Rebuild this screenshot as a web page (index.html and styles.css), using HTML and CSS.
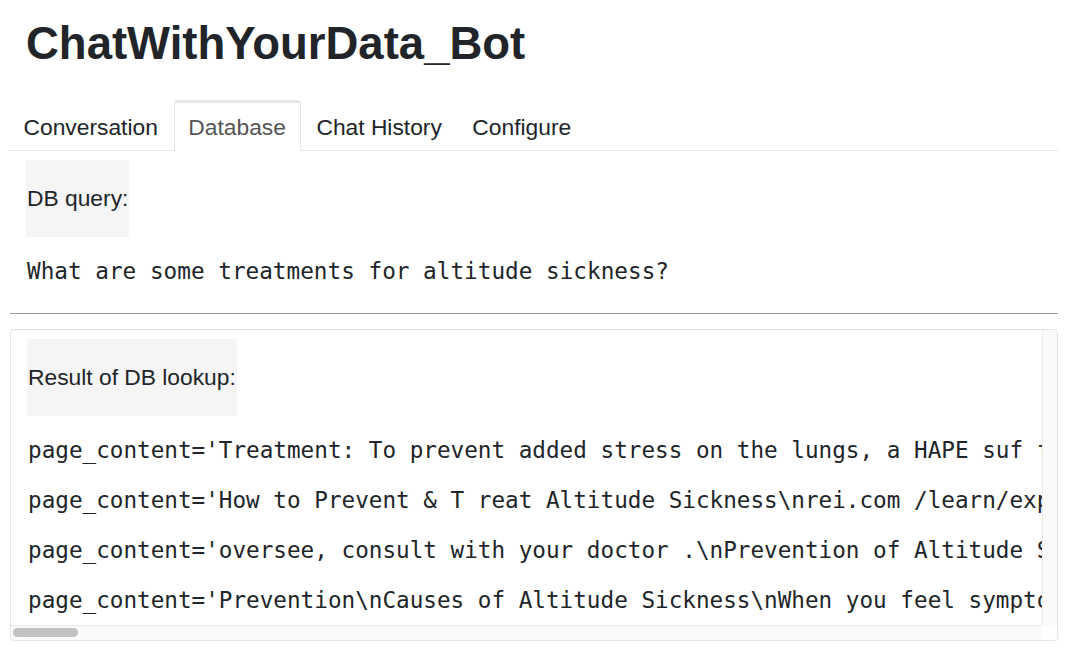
FILE: index.html
```html
<!DOCTYPE html>
<html lang="en">
<head>
<meta charset="utf-8">
<title>ChatWithYourData_Bot</title>
<link rel="stylesheet" href="styles.css">
</head>
<body>
<div class="app">
  <h1 class="title">ChatWithYourData_Bot</h1>
  <nav class="tabs">
    <div class="tab">Conversation</div>
    <div class="tab active">Database</div>
    <div class="tab">Chat History</div>
    <div class="tab">Configure</div>
  </nav>
  <section class="query">
    <div class="label">DB query:</div>
    <pre class="query-text">What are some treatments for altitude sickness?</pre>
  </section>
  <hr class="divider">
  <section class="card">
    <div class="card-body">
      <div class="viewport">
        <div class="label label-result">Result of DB lookup:</div>
        <div class="lines">
          <pre class="line">page_content='Treatment: To prevent added stress on the lungs, a HAPE suf ferer should limit exertion and move to a lower altitude. Oxygen and medication may be used to treat the condition.' metadata={'source': 'docs/altitude_sickness.pdf', 'page': 1}</pre>
          <pre class="line">page_content='How to Prevent &amp; T reat Altitude Sickness\nrei.com /learn/expert-advice/altitude-sickness.html\nAltitude sickness can affect anyone who travels to high elevations.' metadata={'source': 'docs/altitude_sickness.pdf', 'page': 0}</pre>
          <pre class="line">page_content='oversee, consult with your doctor .\nPrevention of Altitude Sickness\nThe best way to prevent altitude sickness is to ascend gradually.' metadata={'source': 'docs/altitude_sickness.pdf', 'page': 2}</pre>
          <pre class="line">page_content='Prevention\nCauses of Altitude Sickness\nWhen you feel symptoms of altitude sickness, stop ascending and rest.' metadata={'source': 'docs/altitude_sickness.pdf', 'page': 2}</pre>
        </div>
      </div>
      <div class="vtrack"></div>
    </div>
    <div class="hbar">
      <div class="htrack"><div class="hthumb"></div></div>
      <div class="corner"></div>
    </div>
  </section>
</div>
</body>
</html>
```

FILE: styles.css
```css
html, body {
  margin: 0;
  padding: 0;
  background: #ffffff;
}

body {
  font-family: "Liberation Sans", Arial, Helvetica, sans-serif;
  color: #212529;
}

.app {
  display: flex;
  flex-direction: column;
  padding: 17px 16px 0 8px;
}

.title {
  margin: 0 0 30px 18px;
  font-size: 45.5px;
  line-height: 53px;
  font-weight: 700;
  color: #212529;
}

.tabs {
  display: flex;
  border-bottom: 1px solid #e6e6e6;
  height: 50px;
}

.tab {
  padding: 0 14px 0 14.5px;
  font-size: 22.8px;
  color: #212529;
  border: 1px solid transparent;
  border-top-width: 3px;
  border-bottom: none;
  height: 49px;
  line-height: 46px;
  margin-top: 1px;
  box-sizing: border-box;
}

.tab.active {
  color: #555555;
  background: #ffffff;
  border-color: #e6e6e6;
  border-radius: 4px 4px 0 0;
  height: 51px;
  margin-top: 0;
  margin-left: 1px;
  line-height: 48px;
  padding: 0 14px 0 13.5px;
}

.query {
  display: flex;
  flex-direction: column;
  align-items: flex-start;
  padding: 9px 0 0 18px;
}

.label {
  background: #f5f5f5;
  font-size: 22.8px;
  line-height: 77px;
  height: 77px;
  padding: 0 1px;
}

.query-text {
  margin: 15px 0 0 1px;
  font-family: "DejaVu Sans Mono", "Liberation Mono", monospace;
  font-size: 22.7px;
  line-height: 38px;
  color: #212529;
}

.divider {
  margin: 23px 0 0 2px;
  border: none;
  border-top: 1px solid #9a9a9a;
  height: 0;
}

.card {
  display: flex;
  flex-direction: column;
  margin: 15px 0 0 2px;
  border: 1px solid #e3e3e3;
  border-radius: 4px;
  box-shadow: 0 1px 2px rgba(0, 0, 0, 0.06);
  overflow: hidden;
}

.card-body {
  display: flex;
}

.viewport {
  flex: 1;
  min-width: 0;
  overflow: hidden;
  display: flex;
  flex-direction: column;
  align-items: flex-start;
  padding: 9px 0 0 16px;
}

.vtrack {
  width: 14px;
  flex: none;
  background: #fafafa;
  border-left: 1px solid #ebebeb;
}

.hbar {
  display: flex;
  height: 15px;
}

.htrack {
  flex: 1;
  background: #fafafa;
  border-top: 1px solid #ebebeb;
  padding: 2px 0 0 2px;
}

.hthumb {
  width: 65px;
  height: 9px;
  border-radius: 5px;
  background: #c2c2c2;
}

.corner {
  width: 15px;
  background: #ffffff;
}

.label-result {
  margin-bottom: 9px;
}

.lines {
  display: flex;
  flex-direction: column;
  padding-left: 1px;
}

.line {
  margin: 0;
  font-family: "DejaVu Sans Mono", "Liberation Mono", monospace;
  font-size: 22.65px;
  line-height: 50px;
  color: #212529;
  white-space: pre;
}
```
